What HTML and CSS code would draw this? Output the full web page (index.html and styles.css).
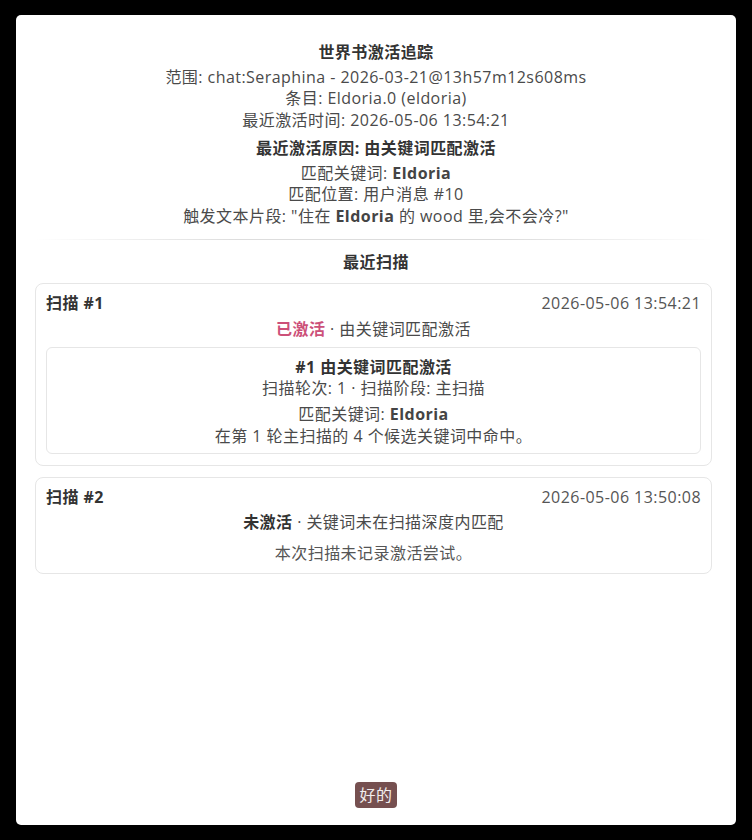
FILE: index.html
```html
<!DOCTYPE html>
<html lang="zh">
<head>
<meta charset="utf-8">
<link rel="stylesheet" href="styles.css">
</head>
<body>
<div class="dialog">
  <div class="content">
    <div class="title">世界书激活追踪</div>
    <div class="meta">
      <div>范围: chat:Seraphina - 2026-03-21@13h57m12s608ms</div>
      <div>条目: Eldoria.0 (eldoria)</div>
      <div>最近激活时间: 2026-05-06 13:54:21</div>
    </div>
    <div class="reason">最近激活原因: 由关键词匹配激活</div>
    <div class="match">
      <div>匹配关键词: <b>Eldoria</b></div>
      <div>匹配位置: 用户消息 #10</div>
      <div>触发文本片段: "住在 <b>Eldoria</b> 的 wood 里,会不会冷?"</div>
    </div>
    <div class="sep"></div>
    <div class="section-title">最近扫描</div>
    <div class="card">
      <div class="card-head">
        <span class="scan-name">扫描 #1</span>
        <span class="scan-time">2026-05-06 13:54:21</span>
      </div>
      <div class="status"><span class="on">已激活</span> · 由关键词匹配激活</div>
      <div class="attempt">
        <div class="attempt-title">#1 由关键词匹配激活</div>
        <div>扫描轮次: 1 · 扫描阶段: 主扫描</div>
        <div class="attempt-detail">
          <div>匹配关键词: <b>Eldoria</b></div>
          <div>在第 1 轮主扫描的 4 个候选关键词中命中。</div>
        </div>
      </div>
    </div>
    <div class="card">
      <div class="card-head">
        <span class="scan-name">扫描 #2</span>
        <span class="scan-time">2026-05-06 13:50:08</span>
      </div>
      <div class="status"><span class="off">未激活</span> · 关键词未在扫描深度内匹配</div>
      <div class="empty">本次扫描未记录激活尝试。</div>
    </div>
  </div>
  <div class="actions">
    <button class="ok">好的</button>
  </div>
</div>
</body>
</html>
```

FILE: styles.css
```css
html, body {
  margin: 0;
  padding: 0;
  background: #000;
}
body {
  font-family: "Open Sans", "Noto Sans CJK SC", sans-serif;
  font-size: 16px;
  line-height: 21.7px;
  letter-spacing: 0.45px;
  color: #4a4a4a;
}
.dialog {
  box-sizing: border-box;
  margin: 15px 16px 0;
  height: 810px;
  background: #fff;
  border-radius: 5px;
  padding: 27px 19px 17px;
  display: flex;
  flex-direction: column;
  text-align: center;
}
.content {
  flex: 1;
}
.title {
  font-weight: 700;
  color: #333;
  margin-bottom: 3px;
}
.reason {
  font-weight: 700;
  color: #333;
  margin-top: 6px;
  margin-bottom: 3px;
}
b {
  font-weight: 700;
  color: #444;
}
.sep {
  height: 1px;
  margin: 11px 4px 12px 0;
  background: linear-gradient(to right, rgba(221,221,221,0), #ddd 30%, #ddd 70%, rgba(221,221,221,0));
}
.section-title {
  font-weight: 700;
  color: #333;
  margin-bottom: 10px;
}
.card {
  border: 1px solid #e6e6e6;
  border-radius: 8px;
  padding: 9px 10px 11px;
  margin: 0 5px 11px 0;
}
.card-head {
  display: flex;
  justify-content: space-between;
}
.scan-name {
  font-weight: 700;
  color: #333;
}
.scan-time {
  color: #555;
}
.status {
  margin-top: 4px;
}
.on {
  font-weight: 700;
  color: #cc5079;
}
.off {
  font-weight: 700;
  color: #333;
}
.attempt {
  margin-top: 6px;
  border: 1px solid #e6e6e6;
  border-radius: 6px;
  padding: 9px 10px 5px;
}
.attempt-title {
  font-weight: 700;
  color: #333;
}
.attempt-detail {
  margin-top: 4px;
}
.empty {
  margin-top: 9px;
  margin-bottom: -1px;
  line-height: 20px;
  color: #555;
}
.actions {
  display: flex;
  justify-content: center;
}
.ok {
  font-family: "Open Sans", "Noto Sans CJK SC", sans-serif;
  font-size: 16px;
  line-height: 22px;
  letter-spacing: 0.45px;
  color: #f2eeee;
  background: #765050;
  border: none;
  border-radius: 4px;
  padding: 2px 5px;
  margin: 0;
}
```
